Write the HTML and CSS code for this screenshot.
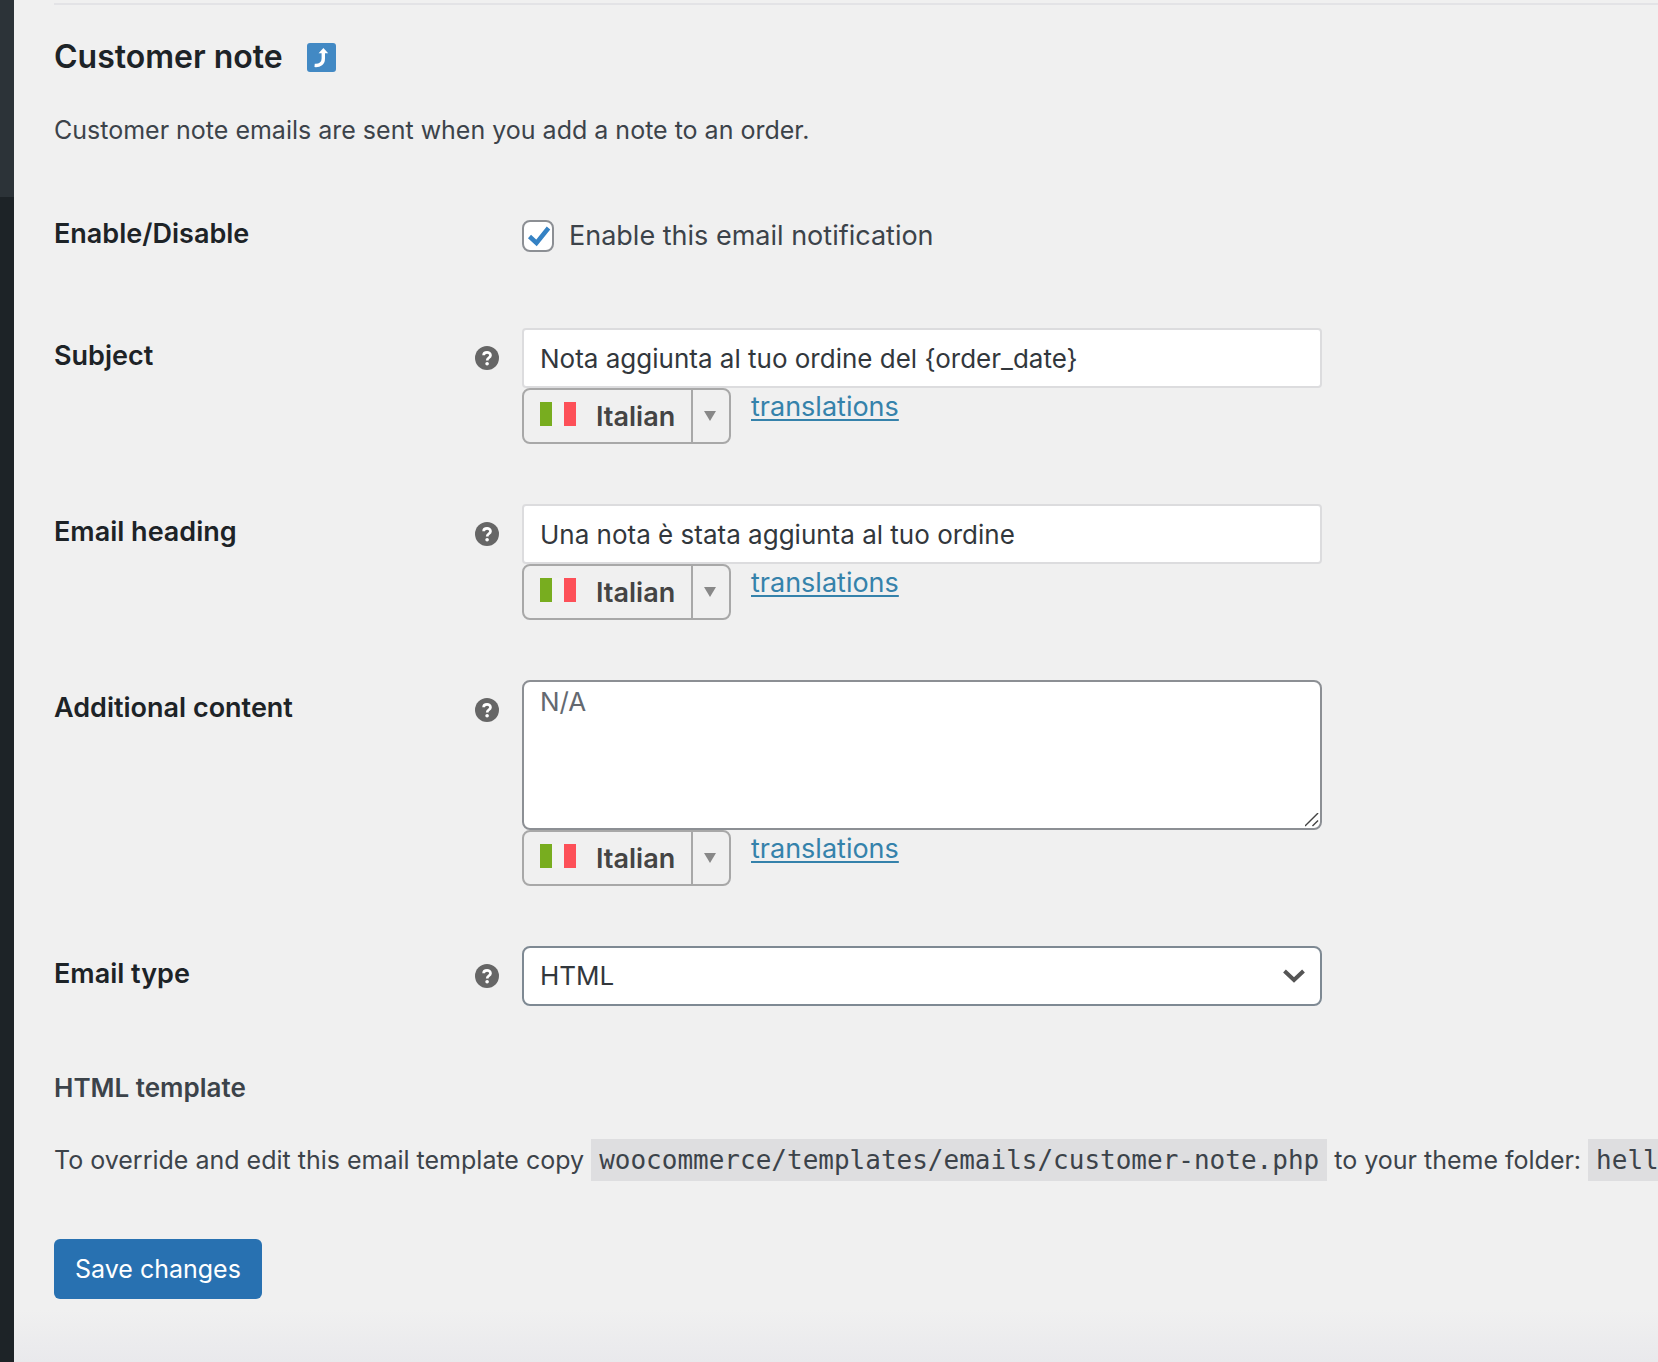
FILE: index.html
```html
<!DOCTYPE html>
<html lang="en">
<head>
    <meta charset="UTF-8">
    <meta name="viewport" content="width=device-width, initial-scale=1.0">
    <title>Customer note</title>
    <link rel="stylesheet" href="styles.css">
</head>
<body>
    <aside class="admin-menu">
        <div class="menu-open"></div>
    </aside>
    <main class="content">
        <form>
            <h2>Customer note
                <a href="#" class="back-link" aria-label="Return to emails">
                    <svg viewBox="0 0 29 29" width="29" height="29">
                        <rect width="29" height="29" rx="3" fill="#4289c4"/>
                        <path d="M7.600 22.400c5.400.5 8.700-2.200 8.700-7V9.500" fill="none" stroke="#fff" stroke-width="3.400"/>
                        <path d="M11.600 10.200L16.400 5l4.800 5.200z" fill="#fff"/>
                    </svg>
                </a>
            </h2>
            <p class="description">Customer note emails are sent when you add a note to an order.</p>

            <table class="form-table">
                <tr class="enable-row">
                    <th>Enable/Disable</th>
                    <td>
                        <label class="check"><input type="checkbox" checked> Enable this email notification</label>
                    </td>
                </tr>
                <tr>
                    <th>
                        <div class="field-label">
                            <label for="subject">Subject</label>
                            <svg class="help" viewBox="0 0 24 24"><circle cx="12" cy="12" r="12" fill="#666"/><path d="M8.600 9.300C8.700 5.500 15.500 5.500 15.500 9.200c0 2.600-3.300 2.500-3.300 5.200" fill="none" stroke="#fff" stroke-width="2.700"/><circle cx="12.100" cy="17.700" r="1.800" fill="#fff"/></svg>
                        </div>
                    </th>
                    <td>
                        <input type="text" id="subject" value="Nota aggiunta al tuo ordine del {order_date}">
                        <div class="language-row">
                            <div class="language">
                                <svg class="flag" viewBox="0 0 36 24"><path d="M0 0h12v24H0z" fill="#78ad1f"/><path d="M12 0h12v24H12z" fill="#f2f2f2"/><path d="M24 0h12v24H24z" fill="#fd5058"/></svg>
                                <select aria-label="Subject language"><option>Italian</option></select>
                            </div>
                            <a href="#">translations</a>
                        </div>
                    </td>
                </tr>
                <tr>
                    <th>
                        <div class="field-label">
                            <label for="heading">Email heading</label>
                            <svg class="help" viewBox="0 0 24 24"><circle cx="12" cy="12" r="12" fill="#666"/><path d="M8.600 9.300C8.700 5.500 15.500 5.500 15.500 9.200c0 2.600-3.300 2.500-3.300 5.200" fill="none" stroke="#fff" stroke-width="2.700"/><circle cx="12.100" cy="17.700" r="1.800" fill="#fff"/></svg>
                        </div>
                    </th>
                    <td>
                        <input type="text" id="heading" value="Una nota è stata aggiunta al tuo ordine">
                        <div class="language-row">
                            <div class="language">
                                <svg class="flag" viewBox="0 0 36 24"><path d="M0 0h12v24H0z" fill="#78ad1f"/><path d="M12 0h12v24H12z" fill="#f2f2f2"/><path d="M24 0h12v24H24z" fill="#fd5058"/></svg>
                                <select aria-label="Email heading language"><option>Italian</option></select>
                            </div>
                            <a href="#">translations</a>
                        </div>
                    </td>
                </tr>
                <tr>
                    <th>
                        <div class="field-label">
                            <label for="additional">Additional content</label>
                            <svg class="help" viewBox="0 0 24 24"><circle cx="12" cy="12" r="12" fill="#666"/><path d="M8.600 9.300C8.700 5.500 15.500 5.500 15.500 9.200c0 2.600-3.300 2.500-3.300 5.200" fill="none" stroke="#fff" stroke-width="2.700"/><circle cx="12.100" cy="17.700" r="1.800" fill="#fff"/></svg>
                        </div>
                    </th>
                    <td>
                        <textarea id="additional" placeholder="N/A"></textarea>
                        <div class="language-row">
                            <div class="language">
                                <svg class="flag" viewBox="0 0 36 24"><path d="M0 0h12v24H0z" fill="#78ad1f"/><path d="M12 0h12v24H12z" fill="#f2f2f2"/><path d="M24 0h12v24H24z" fill="#fd5058"/></svg>
                                <select aria-label="Additional content language"><option>Italian</option></select>
                            </div>
                            <a href="#">translations</a>
                        </div>
                    </td>
                </tr>
                <tr>
                    <th>
                        <div class="field-label">
                            <label for="email-type">Email type</label>
                            <svg class="help" viewBox="0 0 24 24"><circle cx="12" cy="12" r="12" fill="#666"/><path d="M8.600 9.300C8.700 5.500 15.500 5.500 15.500 9.200c0 2.600-3.300 2.500-3.300 5.200" fill="none" stroke="#fff" stroke-width="2.700"/><circle cx="12.100" cy="17.700" r="1.800" fill="#fff"/></svg>
                        </div>
                    </th>
                    <td>
                        <select id="email-type" class="email-type"><option>HTML</option></select>
                    </td>
                </tr>
            </table>

            <h4>HTML template</h4>
            <p class="template">To override and edit this email template copy <code>woocommerce/templates/emails/customer-note.php</code> to your theme folder: <code>hell</code></p>
            <button type="submit" class="save">Save changes</button>
        </form>
    </main>
</body>
</html>
```
FILE: styles.css
```css
* {
    box-sizing: border-box;
}
body {
    margin: 0;
    min-height: 100vh;
    display: flex;
    overflow: hidden;
    background: linear-gradient(to top, #e9e9ec, #f0f0f0 52px);
    color: #3c434a;
    font-family: Inter, sans-serif;
    font-size: 25px;
    line-height: 40px;
}
.admin-menu {
    flex: 0 0 14px;
    background-color: #1d2327;
}
.menu-open {
    height: 197px;
    background-color: #2c3338;
}
.content {
    flex: 1;
    min-width: 0;
    padding: 3px 0 50px 40px;
}
.content form {
    border-top: 2px solid #e3e3e6;
}
h2 {
    display: flex;
    align-items: center;
    gap: 24px;
    margin: 32px 0 33px;
    color: #1d2327;
    font-size: 32px;
    font-weight: 600;
}
.back-link {
    display: flex;
}
.description {
    margin: 0 0 26px;
}
.form-table {
    width: 100%;
    border-collapse: collapse;
}
.form-table th {
    width: 468px;
    padding: 38px 23px 0 0;
    color: #1d2327;
    font-size: 27px;
    font-weight: 600;
    text-align: left;
    vertical-align: top;
}
.form-table td {
    padding: 30px 0;
    font-size: 27px;
    vertical-align: top;
}
.form-table .enable-row td {
    padding: 40px 0 42px;
}
.field-label {
    display: flex;
    align-items: center;
    justify-content: space-between;
}
.help {
    width: 24px;
    height: 24px;
    margin-top: 4px;
}
.check {
    display: flex;
    align-items: center;
    gap: 15px;
}
.check input {
    appearance: none;
    width: 32px;
    height: 32px;
    margin: 0;
    border: 2px solid #8c8f94;
    border-radius: 8px;
    background: #fff url("data:image/svg+xml,%3Csvg xmlns='http://www.w3.org/2000/svg' viewBox='0 0 28 28'%3E%3Cpath d='M5.500 14.500l7 6.500L24.500 6' fill='none' stroke='%233582c4' stroke-width='4.500'/%3E%3C/svg%3E") center / 28px no-repeat;
}
input[type="text"],
textarea,
.email-type {
    display: block;
    width: 100%;
    max-width: 800px;
    height: 60px;
    padding: 0 16px;
    border: 2px solid #dcdcde;
    border-radius: 4px;
    background-color: #fff;
    color: #32373c;
    font-family: inherit;
    font-size: 26px;
    line-height: 40px;
}
textarea {
    height: 150px;
    border-color: #8c8f94;
    border-radius: 8px;
}
textarea::placeholder {
    color: #646970;
}
textarea::-webkit-resizer {
    background: url("data:image/svg+xml,%3Csvg xmlns='http://www.w3.org/2000/svg' viewBox='0 0 15 15'%3E%3Cpath d='M0 14L14 0M8 14l6-6' stroke='%23444' stroke-width='1.500'/%3E%3C/svg%3E") left top / 14px 14px no-repeat;
}
.email-type {
    appearance: none;
    border-color: #7e8993;
    border-radius: 8px;
    background: #fff url("data:image/svg+xml,%3Csvg xmlns='http://www.w3.org/2000/svg' viewBox='0 0 22 14'%3E%3Cpath d='M1.500 2l9.500 9L20.500 2' fill='none' stroke='%23555' stroke-width='4'/%3E%3C/svg%3E") right 15px center / 22px 14px no-repeat;
}
.language-row {
    display: flex;
    gap: 20px;
}
.language {
    display: flex;
    align-items: center;
    width: 209px;
    height: 56px;
    padding-left: 16px;
    border: 2px solid #a8a8a8;
    border-radius: 8px;
}
.flag {
    width: 36px;
    height: 24px;
    margin-bottom: 4px;
}
.language select {
    appearance: none;
    flex: 1;
    height: 52px;
    padding: 0 0 0 20px;
    border: none;
    background: url("data:image/svg+xml,%3Csvg xmlns='http://www.w3.org/2000/svg' viewBox='0 0 38 52'%3E%3Cpath d='M0 0h2v52H0z' fill='%23a8a8a8'/%3E%3Cpath d='M13 21h12l-6 10z' fill='%23888'/%3E%3C/svg%3E") right center / 38px 52px no-repeat;
    color: #444;
    font-family: inherit;
    font-size: 27px;
    font-weight: 600;
}
a {
    color: #3582ab;
    text-decoration-thickness: 2px;
    text-underline-offset: 3px;
}
.language-row a {
    line-height: 38px;
}
h4 {
    margin: 32px 0;
    font-size: 26px;
    font-weight: 600;
}
.template {
    margin: 0 0 59px;
    white-space: nowrap;
}
code {
    padding: 6px 8px;
    background-color: #dedee0;
    font-family: "DejaVu Sans Mono", monospace;
    font-size: 26px;
}
.save {
    height: 60px;
    padding: 0 21px;
    border: none;
    border-radius: 6px;
    background-color: #2871b1;
    color: #fff;
    font-family: inherit;
    font-size: 25px;
    cursor: pointer;
}
```
